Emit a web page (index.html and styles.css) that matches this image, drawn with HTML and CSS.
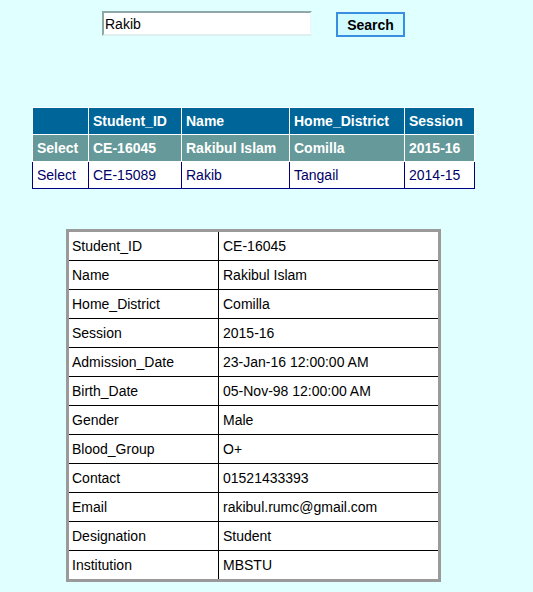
FILE: index.html
```html
<!DOCTYPE html>
<html>
<head>
<meta charset="utf-8">
<link rel="stylesheet" href="styles.css">
</head>
<body>
<div class="page">
  <div class="search">
    <input class="search-input" type="text" value="Rakib">
    <button class="search-btn" type="button">Search</button>
  </div>

  <table class="grid">
    <colgroup>
      <col class="g1"><col class="g2"><col class="g3"><col class="g4"><col class="g5">
    </colgroup>
    <thead>
      <tr class="grid-head">
        <th>&nbsp;</th><th>Student_ID</th><th>Name</th><th>Home_District</th><th>Session</th>
      </tr>
    </thead>
    <tbody>
      <tr class="grid-selected">
        <td>Select</td><td>CE-16045</td><td>Rakibul Islam</td><td>Comilla</td><td>2015-16</td>
      </tr>
      <tr class="grid-row">
        <td>Select</td><td>CE-15089</td><td>Rakib</td><td>Tangail</td><td>2014-15</td>
      </tr>
    </tbody>
  </table>

  <table class="details">
    <colgroup><col class="d1"><col class="d2"></colgroup>
    <tbody>
      <tr><td>Student_ID</td><td>CE-16045</td></tr>
      <tr><td>Name</td><td>Rakibul Islam</td></tr>
      <tr><td>Home_District</td><td>Comilla</td></tr>
      <tr><td>Session</td><td>2015-16</td></tr>
      <tr><td>Admission_Date</td><td>23-Jan-16 12:00:00 AM</td></tr>
      <tr><td>Birth_Date</td><td>05-Nov-98 12:00:00 AM</td></tr>
      <tr><td>Gender</td><td>Male</td></tr>
      <tr><td>Blood_Group</td><td>O+</td></tr>
      <tr><td>Contact</td><td>01521433393</td></tr>
      <tr><td>Email</td><td>rakibul.rumc@gmail.com</td></tr>
      <tr><td>Designation</td><td>Student</td></tr>
      <tr><td>Institution</td><td>MBSTU</td></tr>
    </tbody>
  </table>
</div>
</body>
</html>
```

FILE: styles.css
```css
html, body {
  margin: 0;
  padding: 0;
  background: #e0ffff;
}
body {
  font-family: "Liberation Sans", Arial, sans-serif;
  font-size: 14px;
  color: #000;
}
.page {
  width: 507px;
  padding-top: 11px;
}
.search {
  display: flex;
  justify-content: center;
  align-items: flex-start;
  gap: 24px;
}
.search-input {
  box-sizing: border-box;
  width: 210px;
  height: 25px;
  margin: 0;
  padding: 0 1px;
  border-style: solid;
  border-width: 2px;
  border-color: #8fa7a7 #e8fafa #dfeeee #8fa7a7;
  background: #fff;
  font-family: "Liberation Sans", Arial, sans-serif;
  font-size: 14px;
  color: #000;
  outline: none;
}
.search-btn {
  box-sizing: border-box;
  width: 69px;
  height: 25px;
  margin: 1px 0 0 0;
  padding: 0;
  border: 2px solid #3a8ee0;
  background: #d2fbff;
  font-family: "Liberation Sans", Arial, sans-serif;
  font-size: 14px;
  font-weight: bold;
  color: #000;
}

.grid {
  margin: 70px auto 0;
  border-collapse: collapse;
  table-layout: fixed;
  width: 442px;
}
.g1 { width: 56px; }
.g2 { width: 93px; }
.g3 { width: 108px; }
.g4 { width: 115px; }
.g5 { width: 70px; }
.grid th,
.grid td {
  padding: 4px 4px;
  line-height: 18px;
  text-align: left;
  white-space: nowrap;
}
.grid-head th {
  background: #006699;
  color: #fff;
  font-weight: bold;
  border: 1px solid #fff;
}
.grid-selected td {
  background: #669999;
  color: #fff;
  font-weight: bold;
  border: 1px solid #fff;
}
.grid-row td {
  background: #fff;
  color: #000066;
  border: 1px solid #000080;
}

.details {
  margin: 40px 0 0 66px;
  border: 3px solid #9a9a9a;
  border-collapse: separate;
  border-spacing: 0;
  table-layout: fixed;
  width: 375px;
  background: #fff;
}
.d1 { width: 150px; }
.d2 { width: 219px; }
.details td {
  height: 28px;
  padding: 0 3px;
  line-height: 28px;
  border-right: 1px solid #000;
  border-bottom: 1px solid #000;
  white-space: nowrap;
  box-sizing: border-box;
}
.details tr td:last-child {
  border-right: none;
  padding-left: 4px;
}
.details tr:last-child td {
  border-bottom: none;
}
```
